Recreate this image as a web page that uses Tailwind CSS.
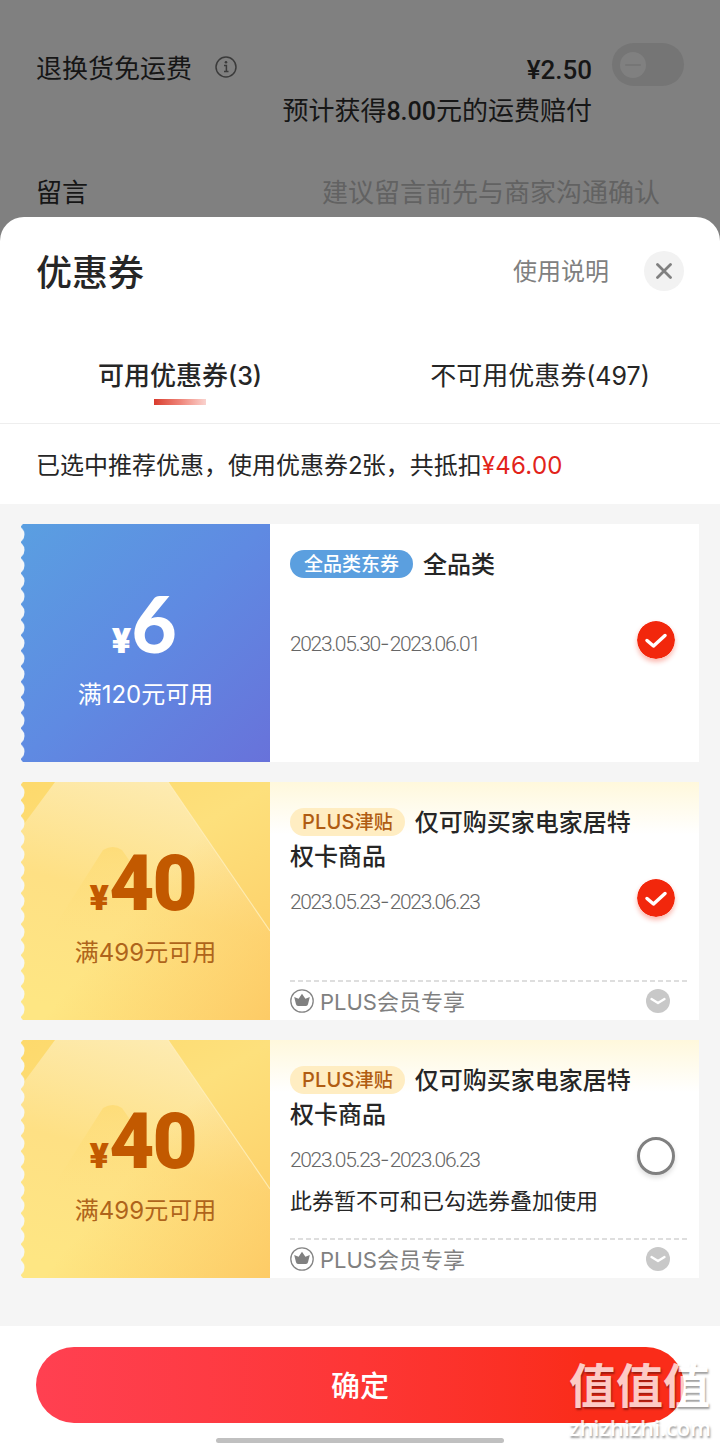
<!DOCTYPE html>
<html lang="zh-CN">
<head>
<meta charset="utf-8">
<title>优惠券</title>
<script src="https://cdn.jsdelivr.net/npm/@tailwindcss/browser@4"></script>
</head>
<body class="bg-[#808080]">
<svg width="0" height="0" class="absolute">
  <defs>
    <pattern id="scallop" width="10" height="15.5" y="2.7" patternUnits="userSpaceOnUse"><circle cx="-5.5" cy="7.75" r="9" fill="#f5f7f8"/></pattern>
    <linearGradient id="blue" x1="0" y1="0" x2="1" y2="1"><stop offset="0" stop-color="#5a9fe1"/><stop offset=".5" stop-color="#5f8ae2"/><stop offset="1" stop-color="#6872da"/></linearGradient>
    <linearGradient id="gold" x1="0" y1="0" x2=".6" y2="1"><stop offset="0" stop-color="#fdd96c"/><stop offset=".45" stop-color="#fde07c"/><stop offset="1" stop-color="#fdcf68"/></linearGradient>
    <linearGradient id="facet" x1=".6" y1="0" x2=".3" y2="1"><stop offset="0" stop-color="#fdebb2"/><stop offset=".5" stop-color="#fee084"/><stop offset="1" stop-color="#fee683"/></linearGradient>
    <linearGradient id="glow" x1=".45" y1=".55" x2="1" y2="1"><stop offset="0" stop-color="#fdcd66" stop-opacity="0"/><stop offset="1" stop-color="#fdcb66"/></linearGradient>
    <linearGradient id="peak" x1="0" y1="0" x2="0" y2="1"><stop offset="0" stop-color="#fdda70" stop-opacity=".75"/><stop offset="1" stop-color="#fee07e" stop-opacity="0"/></linearGradient>
    <symbol id="goldbg" viewBox="0 0 249 238">
      <rect width="249" height="238" fill="url(#gold)"/>
      <path d="M34 0H147L249 149V238H0V46Z" fill="url(#facet)"/>
      <path d="M34 0H147L249 149V238H0V46Z" fill="url(#glow)"/>
      <path d="M147 0L249 149" stroke="#fff0be" stroke-width="1.2" opacity=".8"/>
      <path d="M82 68Q92 62 101 68L158 150H30Z" fill="url(#peak)"/>
      <rect width="10" height="238" fill="url(#scallop)"/>
    </symbol>
    <symbol id="crown" viewBox="0 0 24 24">
      <circle cx="12" cy="12" r="11.2" fill="none" stroke="#858585" stroke-width="1.3"/>
      <path d="M4.2 8L8.600 9.800L12 4.800L15.400 9.800L19.800 8L18 15.300Q17.600 16.900 16 16.900H8Q6.400 16.900 6 15.300Z" fill="#808080"/>
    </symbol>
    <symbol id="down" viewBox="0 0 24 24">
      <circle cx="12" cy="12" r="12" fill="#c8c8c8"/>
      <path d="M5.500 10L12 14L18.500 10" fill="none" stroke="#fff" stroke-width="2.300" stroke-linecap="round" stroke-linejoin="round"/>
    </symbol>
    <symbol id="check" viewBox="0 0 38 38">
      <circle cx="19" cy="19" r="19" fill="#f2270c"/>
      <path d="M10 19.500L16.500 25L28 14.500" fill="none" stroke="#fff" stroke-width="3.500" stroke-linecap="round" stroke-linejoin="round"/>
    </symbol>
  </defs>
</svg>
<div class="relative flex h-[1444px] w-[720px] flex-col overflow-hidden bg-[#808080] font-['Roboto','Noto_Sans_CJK_SC',sans-serif] text-[#262626] whitespace-nowrap">
  <div class="h-[217px] px-9 pt-px text-[26px] text-[#161616]">
    <div class="flex h-[91px] items-end">
      <span class="mb-1 leading-[38px]">退换货免运费</span>
      <svg class="mb-[14px] ml-[23px] size-[22px]" viewBox="0 0 22 22"><circle cx="11" cy="11" r="10" fill="none" stroke="#3b3b3b" stroke-width="1.500"/><path d="M9 9.500H11.400V15.500M9 15.500H13.500" fill="none" stroke="#3b3b3b" stroke-width="1.500"/><circle cx="11" cy="6.300" r="1.300" fill="#3b3b3b"/></svg>
      <span class="mb-[3px] ml-auto font-medium leading-[38px]">¥2.50</span>
      <div class="mb-[6px] ml-5 flex h-[43px] w-[72px] items-center rounded-full bg-[#757575] pl-2"><div class="flex size-[26px] items-center justify-center rounded-full bg-[#808080]"><div class="h-[2px] w-4 rounded bg-[#767676]"></div></div></div>
    </div>
    <div class="mr-[92px] text-right leading-[38px]">预计获得<span class="font-medium text-[25px]">8.00</span>元的运费赔付</div>
    <div class="mt-[43px] flex justify-between leading-[38px]"><span>留言</span><span class="mr-[24px] text-[#626262]">建议留言前先与商家沟通确认</span></div>
  </div>
  <div class="flex flex-1 flex-col rounded-t-[24px] bg-white">
    <div class="flex h-[108px] items-center pr-9 pl-9">
      <h1 class="pt-[6px] text-[36px] leading-[54px] font-medium">优惠券</h1>
      <span class="mr-[35px] ml-auto pt-[2px] text-[24px] text-[#808080]">使用说明</span>
      <div class="flex size-10 items-center justify-center rounded-full bg-[#f2f2f2]"><svg class="size-4" viewBox="0 0 16 16"><path d="M1.500 1.500L14.500 14.500M14.500 1.500L1.500 14.500" stroke="#808080" stroke-width="2.800" stroke-linecap="round"/></svg></div>
    </div>
    <div class="grid h-[99px] grid-cols-2 border-b border-[#eee] text-center text-[26px] font-['Inter','Noto_Sans_CJK_SC',sans-serif]">
      <div class="flex flex-col items-center pt-8"><span class="leading-[38px] font-medium">可用优惠券<span class="text-[25px]">(3)</span></span><div class="mt-[4px] h-[6px] w-[52px] bg-linear-to-r from-[#d93a2d] via-[#ee8378] to-[#f9d3cf]"></div></div>
      <div class="pt-8 leading-[38px]">不可用优惠券<span class="text-[25px]">(497)</span></div>
    </div>
    <div class="flex h-[80px] items-center pt-[3px] pl-9 text-[24px] font-['Inter','Noto_Sans_CJK_SC',sans-serif]"><span>已选中推荐优惠，使用优惠券<span class="tracking-[-1px]">2</span>张，共抵扣</span><span class="tracking-[0.3px] text-[#e2231a]">¥46.00</span></div>
    <main class="flex h-[822px] flex-col gap-5 bg-[#f5f5f5] pt-5 pr-[21px] pl-[21px]">
      <section class="flex h-[238px]">
        <div class="relative w-[249px] text-white">
          <svg class="absolute inset-0" width="249" height="238" viewBox="0 0 249 238"><rect width="249" height="238" fill="url(#blue)"/><rect width="10" height="238" fill="url(#scallop)"/></svg>
          <div class="relative flex flex-col items-center pt-[57px]">
            <div class="mr-[7px] mb-[3px] flex h-[84px] items-baseline leading-[84px]"><span class="text-[34px] font-black font-['Inter']">¥</span><span class="text-[78px] font-black tracking-[-4px] font-['Lato']">6</span></div>
            <div class="mt-[10px] text-[24px] leading-[34px] font-['Inter','Noto_Sans_CJK_SC',sans-serif]">满120元可用</div>
          </div>
        </div>
        <div class="flex flex-1 bg-white pl-5">
          <div class="flex-1 pt-[24px]">
            <div class="flex h-[34px] items-center"><span class="-mt-[2px] flex h-7 items-center rounded-full bg-[#5b9fdf] px-[14px] text-[19px] leading-none font-medium text-white">全品类东券</span><span class="ml-[10px] text-[24px] leading-[34px] font-medium">全品类</span></div>
            <div class="mt-[47px] text-[21px] leading-[30px] font-light tracking-[-1.350px] text-[#666]">2023.05.30<span class="inline-block w-[10px] text-center font-['Inter'] tracking-normal">-</span>2023.06.01</div>
          </div>
          <svg class="mt-[97px] mr-6 size-[38px] rounded-full shadow-[0_3px_5px_#f2270c55]"><use href="#check"/></svg>
        </div>
      </section>
      <section class="flex h-[238px]">
        <div class="relative w-[249px] text-[#c25900]">
          <svg class="absolute inset-0" width="249" height="238"><use href="#goldbg"/></svg>
          <div class="relative flex flex-col items-center pt-[60px]">
            <div class="mr-[6px] flex h-[84px] items-baseline font-black leading-[84px]"><span class="text-[34px] font-black font-['Inter']">¥</span><span class="text-[78px] tracking-[-2px]">40</span></div>
            <div class="mt-[10px] text-[24px] leading-[34px] text-[#af641b] font-['Inter','Noto_Sans_CJK_SC',sans-serif]">满499元可用</div>
          </div>
        </div>
        <div class="flex flex-1 flex-col bg-white bg-linear-to-b from-[#fff8dc] to-white to-22% pr-3 pl-5">
          <div class="flex h-[198px]">
            <div class="flex-1 pt-[24px]">
              <div class="flex h-[34px] items-center"><span class="-mt-[2px] flex h-7 items-center rounded-full bg-[#ffedc2] px-3 text-[19px] leading-none font-medium text-[#b05c12] font-['Inter','Noto_Sans_CJK_SC',sans-serif]"><span class="text-[20px] tracking-[0.2px]">PLUS</span>津贴</span><span class="ml-[10px] text-[24px] leading-[34px] font-medium">仅可购买家电家居特</span></div>
              <div class="text-[24px] leading-[34px] font-medium">权卡商品</div>
              <div class="mt-[13px] text-[21px] leading-[30px] font-light tracking-[-1.350px] text-[#666]">2023.05.23<span class="inline-block w-[10px] text-center font-['Inter'] tracking-normal">-</span>2023.06.23</div>
            </div>
            <svg class="mt-[97px] mr-3 size-[38px] rounded-full shadow-[0_3px_5px_#f2270c55]"><use href="#check"/></svg>
          </div>
          <svg class="h-[2px] w-[397px]" viewBox="0 0 397 2"><path d="M0 1H397" stroke="#dedede" stroke-width="2" stroke-dasharray="5 3"/></svg>
          <div class="flex h-[38px] items-center text-[#808080]"><svg class="size-6"><use href="#crown"/></svg><span class="ml-[6px] pt-[2px] text-[22px] font-['Inter','Noto_Sans_CJK_SC',sans-serif]">PLUS会员专享</span><svg class="mr-[17px] ml-auto size-6"><use href="#down"/></svg></div>
        </div>
      </section>
      <section class="flex h-[238px]">
        <div class="relative w-[249px] text-[#c25900]">
          <svg class="absolute inset-0" width="249" height="238"><use href="#goldbg"/></svg>
          <div class="relative flex flex-col items-center pt-[60px]">
            <div class="mr-[6px] flex h-[84px] items-baseline font-black leading-[84px]"><span class="text-[34px] font-black font-['Inter']">¥</span><span class="text-[78px] tracking-[-2px]">40</span></div>
            <div class="mt-[10px] text-[24px] leading-[34px] text-[#af641b] font-['Inter','Noto_Sans_CJK_SC',sans-serif]">满499元可用</div>
          </div>
        </div>
        <div class="flex flex-1 flex-col bg-white bg-linear-to-b from-[#fff8dc] to-white to-22% pr-3 pl-5">
          <div class="flex h-[198px]">
            <div class="flex-1 pt-[24px]">
              <div class="flex h-[34px] items-center"><span class="-mt-[2px] flex h-7 items-center rounded-full bg-[#ffedc2] px-3 text-[19px] leading-none font-medium text-[#b05c12] font-['Inter','Noto_Sans_CJK_SC',sans-serif]"><span class="text-[20px] tracking-[0.2px]">PLUS</span>津贴</span><span class="ml-[10px] text-[24px] leading-[34px] font-medium">仅可购买家电家居特</span></div>
              <div class="text-[24px] leading-[34px] font-medium">权卡商品</div>
              <div class="mt-[13px] text-[21px] leading-[30px] font-light tracking-[-1.350px] text-[#666]">2023.05.23<span class="inline-block w-[10px] text-center font-['Inter'] tracking-normal">-</span>2023.06.23</div>
              <div class="mt-[11px] text-[22px] leading-[32px]">此券暂不可和已勾选券叠加使用</div>
            </div>
            <div class="mt-[97px] mr-3 size-[38px] rounded-full border-[3px] border-[#808080] bg-white shadow-[0_3px_5px_#00000022]"></div>
          </div>
          <svg class="h-[2px] w-[397px]" viewBox="0 0 397 2"><path d="M0 1H397" stroke="#dedede" stroke-width="2" stroke-dasharray="5 3"/></svg>
          <div class="flex h-[38px] items-center text-[#808080]"><svg class="size-6"><use href="#crown"/></svg><span class="ml-[6px] pt-[2px] text-[22px] font-['Inter','Noto_Sans_CJK_SC',sans-serif]">PLUS会员专享</span><svg class="mr-[17px] ml-auto size-6"><use href="#down"/></svg></div>
        </div>
      </section>
    </main>
    <footer class="flex flex-1 flex-col items-center bg-white pt-[21px]">
      <div class="flex h-[76px] w-[648px] items-center justify-center rounded-full bg-linear-to-r from-[#ff4051] via-[#fd3635] to-[#fa2c19] to-85% pt-[5px] text-[29px] font-medium text-white">确定</div>
      <div class="mt-[15px] h-[5px] w-[288px] rounded-full bg-[#c0c0c0]"></div>
    </footer>
  </div>
  <div class="absolute top-[1361px] left-[569px] w-[144px] text-white opacity-75 [text-shadow:1px_2px_2px_#00000080]">
    <div class="text-[47px] leading-[52px] font-bold">值值值</div>
    <div class="text-[22px] leading-[28px] font-semibold tracking-[-0.1px] font-['Open_Sans',sans-serif]">zhizhizhi.com</div>
  </div>
</div>
</body>
</html>
